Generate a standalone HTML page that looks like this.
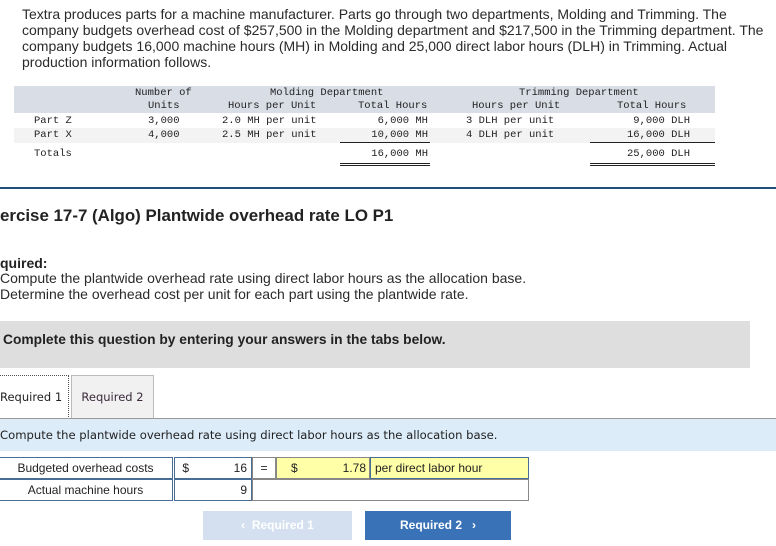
<!DOCTYPE html>
<html><head><meta charset="utf-8"><style>
*{margin:0;padding:0;box-sizing:border-box}
body{width:776px;height:546px;background:#fff;position:relative;overflow:hidden;font-family:"Liberation Sans",Arial,sans-serif;color:#222}
.a{position:absolute;white-space:nowrap}
.p{left:22px;font-size:14px;color:#2a2a2a}
.m{font-family:"Liberation Mono","DejaVu Sans Mono",monospace;font-size:10.5px;color:#222;position:absolute;white-space:nowrap}
.r{text-align:right}
.v{font-family:"DejaVu Sans",Verdana,sans-serif}
.cell{position:absolute;border:1px solid #888;font-size:12px;display:flex;align-items:center}
</style></head><body>
<div class="a p" style="top:6px">Textra produces parts for a machine manufacturer. Parts go through two departments, Molding and Trimming. The</div>
<div class="a p" style="top:22px">company budgets overhead cost of $257,500 in the Molding department and $217,500 in the Trimming department. The</div>
<div class="a p" style="top:38px">company budgets 16,000 machine hours (MH) in Molding and 25,000 direct labor hours (DLH) in Trimming. Actual</div>
<div class="a p" style="top:54px">production information follows.</div>

<div style="position:absolute;left:14px;top:86px;width:701px;height:27px;background:#d9dde6"></div>
<div style="position:absolute;left:14px;top:128px;width:701px;height:15px;background:#f3f3f3"></div>
<div class="m" style="left:135px;top:87px">Number of</div>
<div class="m" style="left:148px;top:100px">Units</div>
<div class="m" style="left:270px;top:87px">Molding Department</div>
<div class="m" style="left:228px;top:100px">Hours per Unit</div>
<div class="m" style="left:358px;top:100px">Total Hours</div>
<div class="m" style="left:519px;top:87px">Trimming Department</div>
<div class="m" style="left:472px;top:100px">Hours per Unit</div>
<div class="m" style="left:617px;top:100px">Total Hours</div>
<div class="m" style="left:34px;top:115px">Part Z</div>
<div class="m" style="left:34px;top:129px">Part X</div>
<div class="m" style="left:34px;top:148px">Totals</div>
<div class="m" style="left:148px;top:115px">3,000</div>
<div class="m" style="left:148px;top:129px">4,000</div>
<div class="m" style="left:222px;top:115px">2.0 MH per unit</div>
<div class="m" style="left:222px;top:129px">2.5 MH per unit</div>
<div class="m r" style="right:348px;top:115px">6,000 MH</div>
<div class="m r" style="right:348px;top:129px">10,000 MH</div>
<div class="m r" style="right:348px;top:148px">16,000 MH</div>
<div class="m" style="left:466px;top:115px">3 DLH per unit</div>
<div class="m" style="left:466px;top:129px">4 DLH per unit</div>
<div class="m r" style="right:86px;top:115px">9,000 DLH</div>
<div class="m r" style="right:86px;top:129px">16,000 DLH</div>
<div class="m r" style="right:86px;top:148px">25,000 DLH</div>
<div style="position:absolute;left:340px;top:142px;width:90px;height:1px;background:#222"></div>
<div style="position:absolute;left:340px;top:163px;width:90px;height:3px;border-top:1px solid #222;border-bottom:1px solid #222"></div>
<div style="position:absolute;left:590px;top:142px;width:125px;height:1px;background:#222"></div>
<div style="position:absolute;left:590px;top:163px;width:125px;height:3px;border-top:1px solid #222;border-bottom:1px solid #222"></div>
<div style="position:absolute;left:0;top:187px;width:776px;height:2px;background:#1f4e79"></div>

<div class="a" style="left:0;top:206px;font-size:16.9px;font-weight:bold;color:#222">ercise 17-7 (Algo) Plantwide overhead rate LO P1</div>
<div class="a" style="left:0;top:255px;font-size:14px;font-weight:bold">quired:</div>
<div class="a" style="left:0;top:270px;font-size:14px;color:#2a2a2a">Compute the plantwide overhead rate using direct labor hours as the allocation base.</div>
<div class="a" style="left:0;top:286px;font-size:14px;color:#2a2a2a">Determine the overhead cost per unit for each part using the plantwide rate.</div>

<div style="position:absolute;left:0;top:321px;width:750px;height:47px;background:#dedede"></div>
<div class="a" style="left:3px;top:332px;font-size:13.8px;font-weight:bold;color:#222">Complete this question by entering your answers in the tabs below.</div>

<div class="a v" style="left:0;top:375px;width:69px;height:44px;border:1px dotted #555;border-left:none;border-bottom:none;background:#fff;font-size:11.5px;line-height:42px">Required 1</div>
<div class="a v" style="left:71px;top:375px;width:83px;height:44px;border:1px solid #bbb;background:#f1f1f1;font-size:11.5px;line-height:42px;text-align:center;color:#3a2a3a">Required 2</div>
<div style="position:absolute;left:0;top:418px;width:776px;height:33px;background:#dcecf9;border-top:1px solid #999"></div>
<div class="a v" style="left:0;top:428px;font-size:11.6px;color:#222">Compute the plantwide overhead rate using direct labor hours as the allocation base.</div>

<div class="cell" style="left:-2px;top:457px;width:175px;height:22px;justify-content:center;border:1px solid #4a6d96">Budgeted overhead costs</div>
<div class="cell" style="left:-2px;top:479px;width:175px;height:22px;justify-content:center;border:1px solid #4a6d96">Actual machine hours</div>
<div class="cell" style="left:174px;top:457px;width:78px;height:22px;border:1px solid #4a6d96;padding:0 4px;justify-content:space-between"><span>&nbsp;$</span><span>16</span></div>
<div class="cell" style="left:174px;top:479px;width:78px;height:22px;border:1px solid #4a6d96;padding:0 4px;justify-content:flex-end">9</div>
<div class="cell" style="left:252px;top:457px;width:24px;height:22px;justify-content:center">=</div>
<div class="cell" style="left:276px;top:457px;width:94px;height:22px;background:#ffffa8;padding:0 3px 0 14px;justify-content:space-between"><span>$</span><span>1.78</span></div>
<div class="cell" style="left:370px;top:457px;width:159px;height:22px;background:#ffffa8;padding-left:4px;border:1px solid #4a6d96">per direct labor hour</div>
<div class="cell" style="left:252px;top:479px;width:277px;height:22px"></div>

<div class="a" style="left:203px;top:511px;width:149px;height:29px;background:#d4e0ef;color:#fff;font-size:12px;font-weight:bold;text-align:center;line-height:29px">&lsaquo;&nbsp;&nbsp;Required 1</div>
<div class="a" style="left:365px;top:511px;width:146px;height:29px;background:#3a72b8;color:#fff;font-size:12px;font-weight:bold;text-align:center;line-height:29px">Required 2&nbsp;&nbsp;&nbsp;&rsaquo;</div>
</body></html>
